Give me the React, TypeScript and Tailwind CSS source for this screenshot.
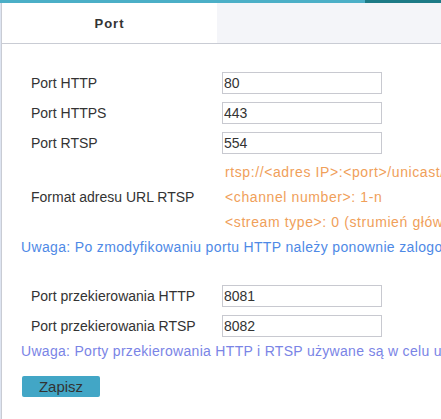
const FONT = { fontFamily: '"Liberation Sans", Arial, sans-serif' };

const PORTS = [
  { label: 'Port HTTP', value: '80' },
  { label: 'Port HTTPS', value: '443' },
  { label: 'Port RTSP', value: '554' },
];

const FORWARD = [
  { label: 'Port przekierowania HTTP', value: '8081' },
  { label: 'Port przekierowania RTSP', value: '8082' },
];

function Row({ label, value }: { label: string; value: string }) {
  return (
    <div className="flex h-[30px] items-center pl-[29px]">
      <div className="w-[191px] shrink-0 text-[14px] text-[#333]">{label}</div>
      <input
        readOnly
        value={value}
        className="h-[22px] w-[160px] shrink-0 border border-[#c8c9d0] bg-white pl-[1px] text-[14px] text-[#333] outline-none"
        style={FONT}
      />
    </div>
  );
}

export default function App() {
  return (
    <div className="h-[419px] w-[441px] overflow-hidden bg-white whitespace-nowrap" style={FONT}>
      <div className="flex h-[3px]">
        <div className="w-[365px] bg-[#4bafc7]" />
        <div className="flex-1 bg-[#1d7b87]" />
      </div>
      <div className="flex h-[416px]">
        <div className="w-[1px] shrink-0 bg-[#dde4f1]" />
        <div className="w-[1px] shrink-0 bg-[#c9ccd4]" />
        <div className="min-w-0 flex-1">
          <div className="flex h-[41px] border-b border-[#c9ccd4] bg-[#f4f5f9]">
            <div className="flex w-[215px] items-center justify-center bg-white pt-[1px] text-[13px] font-bold tracking-[1px] text-[#333]">
              Port
            </div>
          </div>

          <div className="pt-[24px]">
            {PORTS.map((p) => (
              <Row key={p.label} {...p} />
            ))}

            <div className="mt-[2px] flex items-center pl-[29px]">
              <div className="w-[191px] shrink-0 text-[14px] text-[#333]">Format adresu URL RTSP</div>
              <div className="pl-[3px] text-[14px] leading-[25px] tracking-[0.6px] text-[#f0a05a]">
                <div>rtsp://&lt;adres IP&gt;:&lt;port&gt;/unicast/c&lt;channel number&gt;/s&lt;stream type&gt;/live</div>
                <div>&lt;channel number&gt;: 1-n</div>
                <div>&lt;stream type&gt;: 0 (strumień główny), 1 (strumień pomocniczy)</div>
              </div>
            </div>

            <div className="pl-[19px] text-[14px] leading-[25px] tracking-[0.35px] text-[#4e89e6]">
              Uwaga: Po zmodyfikowaniu portu HTTP należy ponownie zalogować się do urządzenia.
            </div>

            <div className="mt-[21px]">
              {FORWARD.map((p) => (
                <Row key={p.label} {...p} />
              ))}
            </div>

            <div className="pl-[19px] text-[14px] leading-[20px] tracking-[0.3px] text-[#7a84e6]">
              Uwaga: Porty przekierowania HTTP i RTSP używane są w celu uzyskania dostępu z sieci zewnętrznej.
            </div>

            <div className="mt-[14px] pl-[20px]">
              <button
                className="h-[21px] w-[78px] rounded-[2px] bg-[#42a6c6] text-[15px] leading-[21px] text-[#333]"
                style={FONT}
              >
                Zapisz
              </button>
            </div>
          </div>
        </div>
      </div>
    </div>
  );
}
